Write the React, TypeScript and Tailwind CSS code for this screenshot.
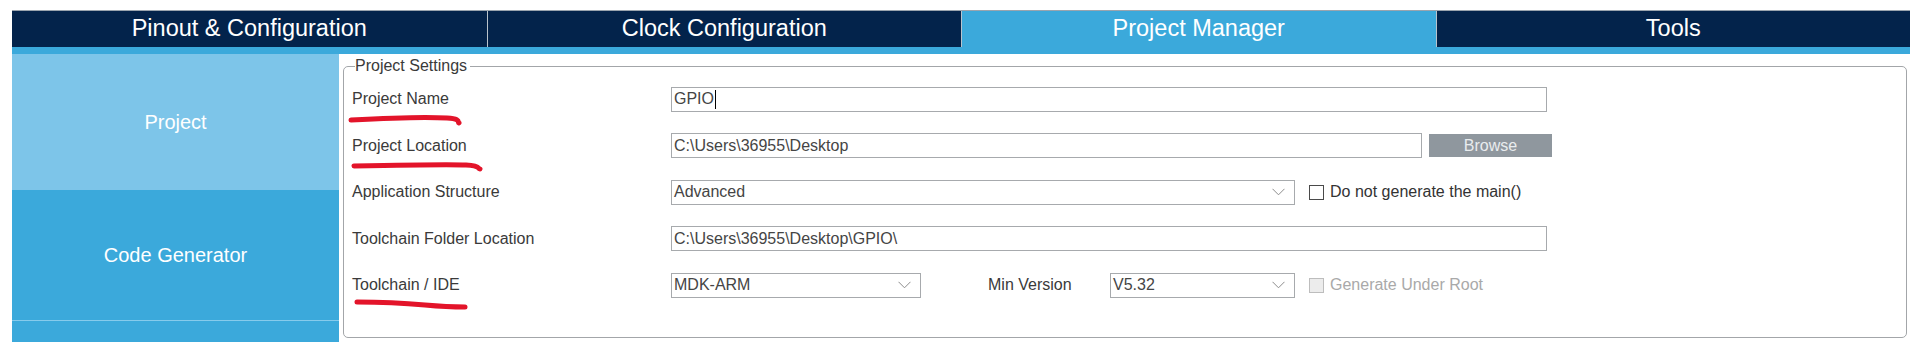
import clsx from "clsx";

const tabs = [
  { label: "Pinout & Configuration", active: false },
  { label: "Clock Configuration", active: false },
  { label: "Project Manager", active: true },
  { label: "Tools", active: false },
];

function Chevron() {
  return (
    <svg width="13" height="8" viewBox="0 0 13 8" className="shrink-0">
      <path d="M0.5 0.8 L6.5 6.8 L12.5 0.8" fill="none" stroke="#8c8c8c" strokeWidth="1" />
    </svg>
  );
}

function TextBox({ value, caret, className }: { value: string; caret?: boolean; className?: string }) {
  return (
    <div className={clsx("flex h-[25px] items-center border border-[#a7aaad] bg-white pl-[2px]", className)}>
      <span>{value}</span>
      {caret && <span className="ml-px h-[19px] w-px bg-black" />}
    </div>
  );
}

function Select({ value, className }: { value: string; className?: string }) {
  return (
    <div className={clsx("flex h-[25px] items-center justify-between border border-[#a7aaad] bg-white pl-[2px] pr-[9px]", className)}>
      <span>{value}</span>
      <Chevron />
    </div>
  );
}

function Check({ label, disabled }: { label: string; disabled?: boolean }) {
  return (
    <div className="ml-[14px] flex items-center gap-[6px]">
      <span
        className={clsx(
          "h-[15px] w-[15px] border",
          disabled ? "border-[#bdbdbd] bg-[#ececec]" : "border-[#4a4a4a] bg-white"
        )}
      />
      <span className={disabled ? "text-[#a9a9a9]" : "text-[#333]"}>{label}</span>
    </div>
  );
}

// hand-drawn red marks over the labels
function Mark({ d, className }: { d: string; className: string }) {
  return (
    <svg className={clsx("pointer-events-none absolute", className)} width="140" height="14" viewBox="0 0 140 14">
      <path d={d} fill="none" stroke="#e3142a" strokeWidth="5" strokeLinecap="round" strokeLinejoin="round" />
    </svg>
  );
}

function Row({ label, mark, children }: { label: string; mark?: React.ReactNode; children: React.ReactNode }) {
  return (
    <div className="flex h-[46.5px] items-center">
      <div className="relative w-[319px] shrink-0 text-[#3a3a3a]">
        {label}
        {mark}
      </div>
      {children}
    </div>
  );
}

export default function App() {
  return (
    <div className="h-[342px] w-full overflow-hidden bg-white pl-[12px] pr-[9px] pt-[10px] font-['Liberation_Sans',Arial,sans-serif]">
      <div className="grid h-[37px] grid-cols-4 border-t border-[#9aa4ae]">
        {tabs.map((t, i) => (
          <div
            key={t.label}
            className={clsx(
              "flex items-center justify-center text-[23.5px] text-white",
              t.active ? "bg-[#3ba9db]" : "bg-[#03234b]",
              i > 0 && "border-l border-[#b9c3cc]"
            )}
          >
            {t.label}
          </div>
        ))}
      </div>
      <div className="h-[7px] bg-[#3ba9db]" />

      <div className="flex h-[288px]">
        <div className="flex w-[327px] shrink-0 flex-col text-[20px] text-white">
          <div className="flex h-[136px] items-center justify-center bg-[#7dc5e9]">Project</div>
          <div className="flex h-[131px] items-center justify-center border-b border-[#86cbec] bg-[#3ba9db]">Code Generator</div>
          <div className="flex-1 bg-[#3ba9db]" />
        </div>

        <fieldset className="ml-[4px] mr-[3px] mt-[3px] mb-[4px] flex-1 rounded-[5px] border border-[#a3a6a9] pl-[8px] text-[17px]">
          <legend className="ml-[3px] pr-[3px] text-[16px] leading-[18px] text-[#3a3a3a]">Project Settings</legend>
          <div className="pt-[1px] text-[16px]">
            <Row
              label="Project Name"
              mark={<Mark className="left-[-5px] top-[27px]" d="M4 6 C 40 4, 85 3, 100 4 S 110 8, 112 9" />}
            >
              <TextBox value="GPIO" caret className="w-[876px] text-[#454545]" />
            </Row>
            <Row
              label="Project Location"
              mark={<Mark className="left-[-1px] top-[27px]" d="M3 5 C 50 4, 100 3, 115 4 S 126 7, 129 8" />}
            >
              <TextBox value="C:\Users\36955\Desktop" className="w-[751px] text-[#454545]" />
              <div className="ml-[7px] flex h-[23px] w-[123px] items-center justify-center bg-[#8f979e] text-[#e9ecee]">
                Browse
              </div>
            </Row>
            <Row label="Application Structure">
              <Select value="Advanced" className="w-[624px] text-[#454545]" />
              <Check label="Do not generate the main()" />
            </Row>
            <Row label="Toolchain Folder Location">
              <TextBox value="C:\Users\36955\Desktop\GPIO\" className="w-[876px] text-[#454545]" />
            </Row>
            <Row
              label="Toolchain / IDE"
              mark={<Mark className="left-[1px] top-[25px]" d="M4 4 C 30 4, 50 5, 72 7 S 95 9, 112 9" />}
            >
              <Select value="MDK-ARM" className="w-[250px] text-[#454545]" />
              <span className="ml-[67px] w-[122px] text-[#3a3a3a]">Min Version</span>
              <Select value="V5.32" className="w-[185px] text-[#454545]" />
              <Check label="Generate Under Root" disabled />
            </Row>
          </div>
        </fieldset>
      </div>
    </div>
  );
}
